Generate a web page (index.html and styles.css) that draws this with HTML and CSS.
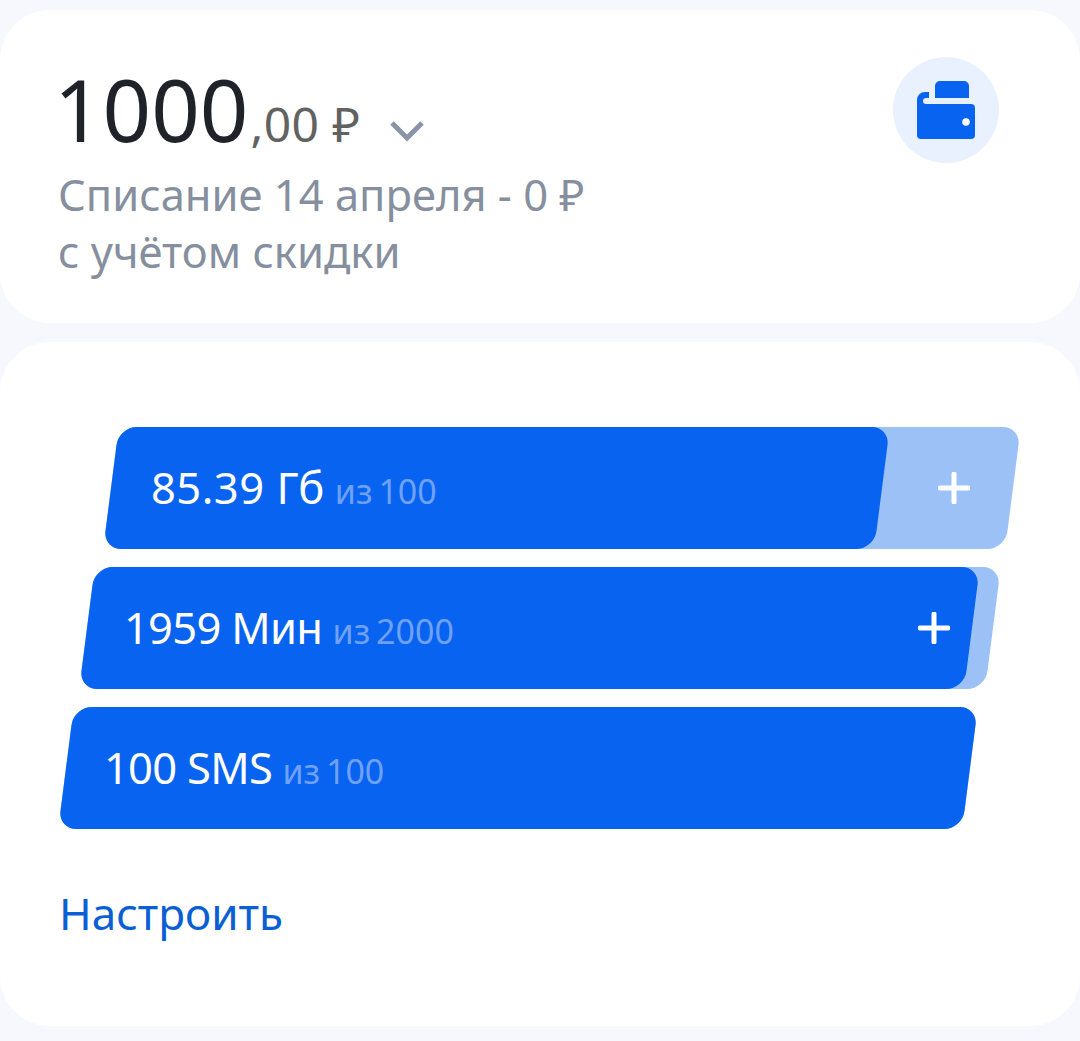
FILE: index.html
```html
<!DOCTYPE html>
<html lang="en">
<head>
  <meta charset="UTF-8">
  <title>Баланс и пакеты</title>
  <link rel="stylesheet" href="styles.css">
</head>
<body>
  <section class="card balance-card">
    <div class="balance-info">
      <div class="balance">
        <span class="amount">1000</span><span class="cents">,00 ₽</span>
        <svg class="chevron" width="36" height="22" viewBox="0 0 36 22"><path d="M3 3 L18 18 L33 3" fill="none" stroke="#8a94a6" stroke-width="5"/></svg>
      </div>
      <p class="charge">Списание 14 апреля - 0 ₽<br>с учётом скидки</p>
    </div>
    <div class="wallet">
      <svg width="106" height="106" viewBox="0 0 106 106">
        <path d="M42 29 a5 5 0 0 1 5 -5 H71 a5 5 0 0 1 5 5 V41 H42 Z" fill="#0763f0"/>
        <path d="M24 78 V43 a8 8 0 0 1 8 -8 H36 V41 H33 a3 3 0 0 0 0 6 H78 a4 4 0 0 1 4 4 V78 a4 4 0 0 1 -4 4 H28 a4 4 0 0 1 -4 -4 Z" fill="#0763f0"/>
        <circle cx="73" cy="65" r="3.8" fill="#fff"/>
      </svg>
    </div>
  </section>

  <section class="card packages-card">
    <div class="bars">
      <div class="track track-data">
        <div class="fill fill-data">
          <div class="label"><span class="value value-data">85.39 Гб</span> <span class="total">из 100</span></div>
        </div>
        <svg class="plus plus-data" width="32" height="32" viewBox="0 0 32 32"><path d="M2 16 H30 M16 2 V30" stroke="#fff" stroke-width="5" stroke-linecap="round"/></svg>
      </div>
      <div class="track track-min">
        <div class="fill fill-min">
          <div class="label"><span class="value value-tight">1959 Мин</span> <span class="total">из 2000</span></div>
          <svg class="plus" width="32" height="32" viewBox="0 0 32 32"><path d="M2 16 H30 M16 2 V30" stroke="#fff" stroke-width="5" stroke-linecap="round"/></svg>
        </div>
      </div>
      <div class="track track-sms">
        <div class="fill fill-sms">
          <div class="label"><span class="value value-tight">100 SMS</span> <span class="total">из 100</span></div>
        </div>
      </div>
    </div>
    <a class="setup" href="#">Настроить</a>
  </section>
</body>
</html>
```

FILE: styles.css
```css
body {
  margin: 0;
  padding-top: 10px;
  height: 1041px;
  box-sizing: border-box;
  overflow: hidden;
  font-family: "Noto Sans", "DejaVu Sans", sans-serif;
  background: #f6f8fd;
}

.card {
  background: #fff;
  border-radius: 50px;
}

.balance-card {
  height: 313px;
  margin-bottom: 19px;
  padding: 47px 81px 0 58px;
  box-sizing: border-box;
  display: flex;
  justify-content: space-between;
  align-items: flex-start;
}

.balance {
  display: flex;
  align-items: baseline;
  height: 109px;
  line-height: 104px;
}

.amount {
  margin-left: -4px;
  font-size: 85px;
  color: #1f2229;
}

.cents {
  margin-left: 2px;
  font-size: 48px;
  letter-spacing: 0.4px;
  color: #626262;
}

.chevron {
  margin: 0 0 18px 28px;
}

.charge {
  margin: 0;
  font-size: 43.5px;
  line-height: 57px;
  color: #858f9d;
}

.wallet {
  width: 106px;
  height: 106px;
  border-radius: 50%;
  background: #e8f1fd;
}

.packages-card {
  height: 684px;
  padding-top: 85px;
  box-sizing: border-box;
}

.bars {
  display: flex;
  flex-direction: column;
  gap: 18px;
}

.track {
  height: 122px;
  border-radius: 18px;
  background: #9cc1f7;
  transform: skewX(-7.3deg);
  display: flex;
  align-items: center;
}

.track-data { margin-left: 111px; width: 902px; }
.track-min { margin-left: 87px; width: 906px; }
.track-sms { margin-left: 66px; width: 904px; }

.fill {
  height: 100%;
  box-sizing: border-box;
  border-radius: 18px;
  background: #0763f0;
  display: flex;
  align-items: center;
  justify-content: space-between;
}

.fill-data { width: 771px; padding-left: 40px; }
.fill-min { width: 885px; padding: 0 22px 0 37px; }
.fill-sms { width: 904px; padding-left: 38px; }

.label {
  padding-bottom: 3px;
  transform: skewX(7.3deg);
  white-space: nowrap;
}

.plus {
  transform: skewX(7.3deg);
}

.plus-data {
  margin-left: 56px;
}

.value {
  font-size: 43.5px;
  color: #fff;
}

.value-data { letter-spacing: 0.5px; }
.value-tight { letter-spacing: -0.7px; }

.total {
  margin-left: 6px;
  font-size: 34px;
  word-spacing: -3px;
  color: #6fa1f6;
}

.setup {
  display: block;
  margin: 54px 0 0 59px;
  font-size: 44px;
  color: #0a5fd4;
  text-decoration: none;
}
```
